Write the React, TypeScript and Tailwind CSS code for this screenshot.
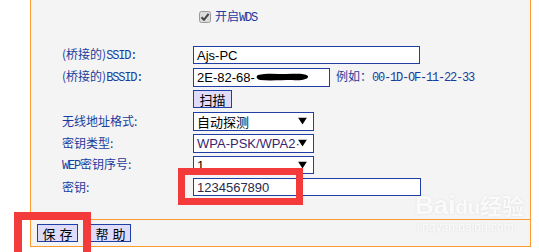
import React from 'react'

const cjk = { fontFamily: '"Noto Sans CJK SC", sans-serif' }

// ASCII part of a label, set narrow like the router's bitmap font
const M = ({ children }: { children: React.ReactNode }) => (
    <span className="font-['Liberation_Mono',monospace] text-[12px] tracking-[-1.2px]">{children}</span>
)

const Label = ({ children }: { children: React.ReactNode }) => (
    <div className="text-[12px] leading-none text-[#1a3c9e] whitespace-nowrap" style={cjk}>{children}</div>
)

const Box = ({ w, h, children }: { w: string; h: string; children?: React.ReactNode }) => (
    <div className={`${w} ${h} border border-[#1f3fa6] bg-white flex items-center pl-[3px] text-[13px] text-black font-['Liberation_Sans',sans-serif] leading-none whitespace-nowrap overflow-hidden`}>
        {children}
    </div>
)

const Arrow = () => (
    <svg width="9" height="7" viewBox="0 0 9 7" className="absolute right-[6px] top-1/2 -translate-y-1/2">
        <path d="M0 0 H9 L4.5 7 Z" fill="#000" />
    </svg>
)

const Select = ({ h, children }: { h: string; children?: React.ReactNode }) => (
    <div className={`relative w-[121px] ${h} border border-[#1f3fa6] bg-white flex items-center pl-[3px] text-[13px] text-black leading-none whitespace-nowrap overflow-hidden`}>
        {children}
        <Arrow />
    </div>
)

const Btn = ({ w, children, extra = '' }: { w: string; children: React.ReactNode; extra?: string }) => (
    <div className={`${w} h-[18px] border border-[#1f3fa6] bg-[#dedcfa] flex items-center justify-center text-[13px] text-black leading-none whitespace-nowrap ${extra}`} style={cjk}>
        {children}
    </div>
)

export default function App() {
    return (
        <div className="relative w-[539px] h-[252px] bg-white overflow-hidden">
            <div className="ml-[30px] w-[501px] h-[247px] border-x border-b border-[#ff9a2e] bg-[#f4f4f4] flex flex-col">
                <div className="h-[220px] border-b border-[#ff9a2e]">
                    {/* WDS checkbox */}
                    <div className="h-[32px] pl-[168px] flex items-center pt-[1px]">
                        <svg width="12" height="12" viewBox="0 0 12 12">
                            <rect x="0.5" y="0.5" width="11" height="11" rx="2" fill="#dcdcdc" stroke="#9a9a9a" />
                            <path d="M2.5 6.2 L5 8.8 L9.6 2.8" fill="none" stroke="#444" strokeWidth="2" />
                        </svg>
                        <span className="ml-[4px] text-[12px] text-[#1a3c9e] leading-none" style={cjk}>开启<M>WDS</M></span>
                    </div>

                    <div className="mt-[12px] grid grid-cols-[131px_1fr] auto-rows-[22px] items-center pl-[31px]">
                        <Label>(桥接的)<M>SSID:</M></Label>
                        <Box w="w-[227px]" h="h-[18px]">Ajs-PC</Box>

                        <Label>(桥接的)<M>BSSID:</M></Label>
                        <div className="flex items-center">
                            <Box w="w-[137px]" h="h-[19px]">
                                2E-82-68-
                                <svg width="54" height="10" viewBox="0 0 54 10" className="ml-[1px]">
                                    <path d="M2 3 C10 1 20 2 30 2 C40 2 48 1 52 4 C53 7 46 9 36 8 C26 8 14 9 4 8 C0 7 0 4 2 3 Z" fill="#000" />
                                </svg>
                            </Box>
                            <span className="ml-[6px] text-[12px] text-[#1a3c9e] leading-none whitespace-nowrap" style={cjk}>
                                例如：<M>00-1D-OF-11-22-33</M>
                            </span>
                        </div>

                        <div />
                        <Btn w="w-[39px]">扫描</Btn>

                        <Label>无线地址格式:</Label>
                        <Select h="h-[19px]"><span style={cjk} className="text-[13px]">自动探测</span></Select>

                        <Label>密钥类型:</Label>
                        <Select h="h-[19px]"><span className="font-['Liberation_Sans',sans-serif] text-[#3a1f6e]">WPA-PSK/WPA2·</span></Select>

                        <Label><M>WEP</M>密钥序号:</Label>
                        <Select h="h-[18px]"><span className="font-['Liberation_Sans',sans-serif]">1</span></Select>

                        <Label>密钥:</Label>
                        <Box w="w-[228px]" h="h-[18px]"><span className="text-[#2b2b4a]">1234567890</span></Box>
                    </div>
                </div>

                <div className="flex-1 flex items-center pl-[6px] gap-[12px]">
                    <Btn w="w-[41px]" extra="tracking-[4px] pl-[4px]">保存</Btn>
                    <Btn w="w-[41px]" extra="tracking-[4px] pl-[4px]">帮助</Btn>
                </div>
            </div>

            {/* red annotation boxes */}
            <div className="absolute left-[178px] top-[168px] w-[125px] h-[37px] border-[7px] border-[#f43b3b]" />
            <div className="absolute left-[14px] top-[212px] w-[77px] h-[48px] border-[8px] border-[#f43b3b]" />

            {/* watermark */}
            <div className="absolute left-[415px] top-[192px] text-white opacity-60 drop-shadow-[0_0_1px_rgba(0,0,0,0.15)] pointer-events-none">
                <div className="text-[26px] font-bold leading-none font-['Liberation_Sans',sans-serif]">
                    Bai<span className="text-[20px]">du</span><span style={cjk} className="text-[22px]">经验</span>
                </div>
                <div className="text-[12px] leading-none mt-[3px] ml-[2px] font-['Liberation_Sans',sans-serif]">jingyan.baidu.com</div>
            </div>
        </div>
    )
}
